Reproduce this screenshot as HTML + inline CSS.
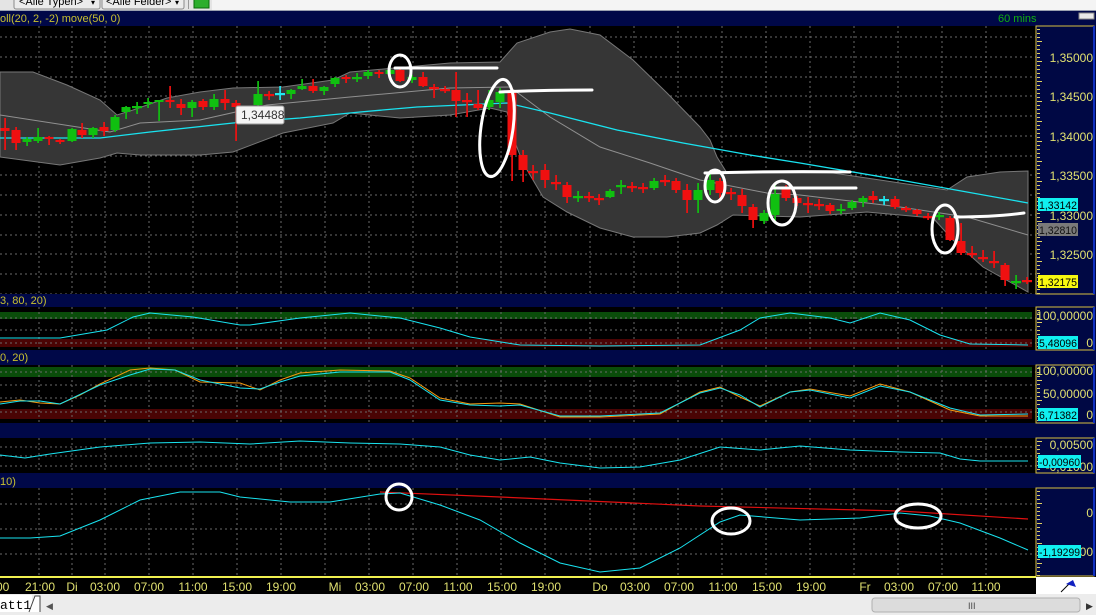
<!DOCTYPE html>
<html><head><meta charset="utf-8"><style>
html,body{margin:0;padding:0;width:1096px;height:615px;overflow:hidden;background:#000;font-family:"Liberation Sans",sans-serif}
svg{display:block}
</style></head><body>
<svg id="s" width="1096" height="615" xmlns="http://www.w3.org/2000/svg" font-family="Liberation Sans, sans-serif" font-size="11">
<rect x="0" y="0" width="1096" height="11" fill="#f4f4f4"/>
<rect x="0" y="0" width="212" height="11" fill="#e4e4e4"/>
<rect x="14" y="-4" width="86" height="13" rx="2" fill="#ececec" stroke="#8a8a8a"/>
<text x="19" y="5" font-size="11" fill="#000">&lt;Alle Typen&gt;</text><text x="91" y="5" font-size="8">▾</text>
<rect x="102" y="-4" width="82" height="13" rx="2" fill="#ececec" stroke="#8a8a8a"/>
<text x="106" y="5" font-size="11" fill="#000">&lt;Alle Felder&gt;</text><text x="175" y="5" font-size="8">▾</text>
<rect x="188" y="-4" width="1" height="13" fill="#999"/>
<rect x="194" y="-3" width="15" height="11" fill="#2cae2c" stroke="#0a6a0a"/>
<rect x="0" y="10" width="1096" height="1" fill="#9aa0b0"/>
<rect x="0" y="11" width="1096" height="15" fill="#000848"/>
<text x="0" y="22" fill="#c8c030">oll(20, 2, -2) move(50, 0)</text>
<text x="998" y="22" fill="#10b010">60 mins</text>
<rect x="1079" y="13" width="15" height="6" fill="#e8e8e8" stroke="#888"/>
<rect x="0" y="26" width="1036" height="268" fill="#000"/>
<g id="grid" stroke="#6a6a6a" stroke-dasharray="2,3" stroke-width="1"></g>
<polygon fill="#363636" stroke="#777" stroke-width="1" points="0,72 33,72 67,85 100,100 117,115 133,110 167,98 200,92 233,88 283,87 333,80 350,72 450,63 500,62 517,43 550,32 570,29 600,35 633,60 667,93 700,127 710,140 717,157 727,173 833,173 900,183 947,190 967,177 1000,172 1028,171 1028,292 983,267 953,240 933,218 867,212 800,217 733,215 717,225 700,233 667,237 633,237 600,228 567,212 543,197 523,163 513,137 507,112 490,108 450,115 400,118 350,113 333,123 283,133 233,152 200,155 140,155 117,153 100,158 60,165 0,157"/>
<polyline fill="none" stroke="#909090" points="0,115 110,132 140,123 200,120 267,105 350,97 450,88 510,87 550,117 600,147 650,163 700,180 767,193 800,195 900,207 967,217 1028,235"/>
<polyline fill="none" stroke="#19e3f0" stroke-width="1.3" points="0,138 100,138 150,132 233,123 300,118 360,112 417,107 507,103 550,113 617,130 683,143 750,155 800,163 900,180 1028,203"/>
<g id="candles"></g>
<rect x="236" y="106" width="48" height="18" rx="2" fill="#f4f4f4" stroke="#999"/>
<text x="241" y="119" fill="#333" font-size="12">1,34488</text>
<g fill="none" stroke="#fff" stroke-width="3" stroke-linecap="round">
<ellipse cx="400" cy="71" rx="11" ry="16"/>
<path d="M395 68 L497 68"/>
<ellipse cx="497" cy="128" rx="16" ry="49" transform="rotate(8 497 128)"/>
<path d="M500 92 Q545 90 592 90"/>
<ellipse cx="715" cy="186" rx="10" ry="16"/>
<path d="M705 173 Q780 171 850 172"/>
<ellipse cx="782" cy="203" rx="14" ry="22"/>
<path d="M772 188 L856 188"/>
<ellipse cx="945" cy="229" rx="13" ry="24"/>
<path d="M955 217 Q995 217 1024 213"/>
</g>
<rect x="0" y="294" width="1096" height="13" fill="#000848"/>
<text x="0" y="304" fill="#c8c030">3, 80, 20)</text>
<rect x="0" y="307" width="1036" height="43" fill="#000"/>
<rect x="0" y="312" width="1032" height="7" fill="#0a4d0a"/>
<rect x="0" y="339" width="1032" height="8" fill="#4a0404"/>
<rect x="0" y="350" width="1096" height="15" fill="#000848"/>
<text x="0" y="361" fill="#c8c030">0, 20)</text>
<rect x="0" y="365" width="1036" height="58" fill="#000"/>
<rect x="0" y="367" width="1032" height="10" fill="#0a4d0a"/>
<rect x="0" y="409" width="1032" height="10" fill="#4a0404"/>
<rect x="0" y="423" width="1096" height="15" fill="#000848"/>
<rect x="0" y="438" width="1036" height="35" fill="#000"/>
<rect x="0" y="473" width="1096" height="15" fill="#000848"/>
<text x="0" y="485" fill="#c8c030">10)</text>
<rect x="0" y="488" width="1036" height="89" fill="#000"/>
<g id="grid2" stroke="#6a6a6a" stroke-dasharray="2,3"></g>
<polyline fill="none" stroke="#19e3f0" points="0,338 60,338 107,330 133,317 150,313 193,317 240,325 250,325 300,318 350,313 400,318 440,328 470,337 520,345 600,346 700,345 740,330 760,318 790,313 830,318 850,323 880,313 910,320 940,335 970,344 1028,345"/>
<polyline fill="none" stroke="#f59a10" points="0,402 20,400 40,403 60,404 80,395 100,384 130,370 150,368 175,370 200,382 240,383 260,390 280,380 300,373 340,370 390,371 410,378 440,398 470,404 500,403 520,404 560,417 600,417 660,414 700,392 720,387 740,397 760,406 790,392 810,389 850,396 880,384 910,392 950,410 980,416 1028,416"/>
<polyline fill="none" stroke="#19e3f0" points="0,404 20,401 40,401 60,404 100,385 130,375 150,369 175,370 200,380 240,388 260,389 280,382 300,376 340,372 390,372 410,380 440,400 470,405 500,406 520,405 560,416 600,416 660,413 700,393 720,388 740,395 760,407 790,392 810,390 850,398 880,386 910,392 950,408 980,415 1028,414"/>
<polyline fill="none" stroke="#19e3f0" points="0,455 25,458 50,454 100,447 150,443 200,442 250,444 300,441 350,443 400,444 440,447 470,455 500,460 530,457 560,463 600,468 640,467 680,460 720,447 760,450 800,446 850,450 900,452 940,453 960,459 980,461 1028,461"/>
<polyline fill="none" stroke="#e01010" stroke-width="1.2" points="380,492 500,497 700,506 900,511 1028,519"/>
<polyline fill="none" stroke="#19e3f0" points="0,538 30,538 60,536 100,520 140,500 180,492 220,492 240,497 290,502 330,502 380,494 400,493 440,505 480,520 520,543 560,563 600,572 640,568 680,548 720,522 740,515 800,520 860,518 900,513 930,516 960,523 1000,538 1028,550"/>
<g fill="none" stroke="#fff" stroke-width="3">
<ellipse cx="399" cy="497" rx="13" ry="13"/>
<ellipse cx="731" cy="521" rx="19" ry="13"/>
<ellipse cx="918" cy="516" rx="23" ry="12"/>
</g>
<g id="axis"></g>
<rect x="0" y="576" width="1036" height="2" fill="#f0f050"/>
<rect x="0" y="578" width="1036" height="16" fill="#000"/>
<g id="times" fill="#e0e070" font-size="12"></g>
<rect x="1036" y="577" width="60" height="17" fill="#fff"/>
<path d="M1061 592 L1070 583" stroke="#000"/><path d="M1066 584 L1073 580 L1076 587 Z" fill="#1020c0"/>
<rect x="0" y="594" width="1096" height="21" fill="#ececec"/>
<rect x="0" y="595" width="32" height="17" fill="#fff"/>
<path d="M29 612 L35 596 L40 596 L40 612" fill="#fff" stroke="#444"/>
<text x="0" y="609" font-size="13" fill="#000" font-family="Liberation Mono,monospace">att1</text>
<text x="46" y="609" font-size="9" fill="#555">◀</text>
<rect x="872" y="598" width="208" height="14" rx="3" fill="#dcdcdc" stroke="#b0b0b0"/>
<text x="968" y="609" font-size="9" fill="#444">III</text>
<text x="1086" y="609" font-size="9" fill="#333">▶</text>
</svg>
<script>
var NS="http://www.w3.org/2000/svg";
function el(p,t,a,txt){var e=document.createElementNS(NS,t);for(var k in a)e.setAttribute(k,a[k]);if(txt)e.textContent=txt;p.appendChild(e);return e;}
var grid=document.getElementById('grid'),grid2=document.getElementById('grid2');
var tx=[40,72,105,149,193,237,281,335,370,414,458,502,546,600,635,679,723,767,811,865,899,943,986];
var tl=["21:00","Di","03:00","07:00","11:00","15:00","19:00","Mi","03:00","07:00","11:00","15:00","19:00","Do","03:00","07:00","11:00","15:00","19:00","Fr","03:00","07:00","11:00"];
var vx=[39,72,105,149,193,237,281,325,369,413,457,501,545,590,634,678,722,766,810,854,898,942,986];
tx.forEach(function(x,i){var g=vx[i];
 el(grid,'line',{x1:g,y1:26,x2:g,y2:294});
 [[307,350],[365,423],[438,473],[488,576]].forEach(function(r){el(grid2,'line',{x1:g,y1:r[0],x2:g,y2:r[1]});});
 el(document.getElementById('times'),'text',{x:x,y:591,'text-anchor':'middle'},tl[i]);});
el(document.getElementById('times'),'text',{x:-4,y:591},'00');
for(var y=37;y<294;y+=19.75)el(grid,'line',{x1:0,y1:Math.round(y),x2:1036,y2:Math.round(y)});
[318,330,343,372,385,398,412,447,456,466,504,529,554].forEach(function(y){el(grid2,'line',{x1:0,y1:y,x2:1036,y2:y});});
var C=[[5,128,131,118,150],[16,130,143,127,150],[27,142,139,137,146],[38,141,137,128,143],[49,137,139,136,145],[60,140,141,139,144],[72,141,129,128,142],[82,130,135,123,138],[93,135,128,127,138],[104,127,131,122,136],[115,130,117,115,132],[126,112,107,106,119],[137,107,107,102,114],[148,104,102,98,108],[159,101,100,100,121],[170,100,102,86,108],[181,104,108,99,115],[192,108,102,100,117],[203,101,107,99,110],[214,107,99,94,110],[225,99,103,90,110],[236,103,107,100,141],[258,105,94,81,107],[269,95,95,91,100],[280,94,94,86,100],[291,94,90,89,99],[302,89,86,79,90],[313,86,91,79,93],[324,91,87,86,95],[335,84,78,77,87],[346,77,79,75,83],[357,78,78,73,82],[368,76,72,70,79],[379,72,74,70,78],[390,74,70,68,76],[400,70,81,68,82],[412,80,77,75,83],[423,77,86,72,87],[434,88,88,84,98],[445,90,90,86,93],[456,90,101,72,117],[467,101,101,93,117],[478,104,108,90,110],[489,107,100,90,110],[500,102,92,88,108],[512,93,155,88,181],[523,155,170,150,182],[533,172,172,165,180],[545,170,180,164,188],[556,183,183,175,190],[567,185,197,182,203],[578,197,197,191,202],[589,197,197,192,202],[599,199,199,194,205],[610,197,191,189,198],[621,186,186,180,194],[632,187,187,182,192],[643,188,188,183,193],[654,188,181,178,190],[665,181,181,175,186],[676,181,190,178,193],[687,190,200,184,213],[698,200,190,183,213],[710,190,180,174,195],[720,181,193,178,200],[731,193,193,188,200],[742,195,206,189,213],[753,207,220,204,228],[764,221,213,210,224],[775,215,194,183,222],[786,188,198,185,201],[797,198,203,196,206],[808,204,204,197,213],[819,205,205,199,210],[830,205,211,203,214],[841,211,209,204,214],[852,208,202,200,210],[863,202,198,196,207],[873,196,200,191,203],[884,200,200,196,205],[895,199,207,196,209],[906,209,209,206,212],[917,210,214,209,216],[928,217,217,213,220],[939,216,216,212,220],[950,218,240,216,241],[961,241,253,223,255],[972,254,254,246,258],[983,258,258,250,262],[994,262,262,251,268],[1005,265,280,263,286],[1016,282,282,275,289],[1027,281,281,277,284]];
var cg=document.getElementById('candles');
C.forEach(function(c){var x=c[0],o=c[1],cl=c[2],col=o==cl?(x==280||x==884?'#20e8f0':(x==137||x==357||x==578||x==621||x==939||x==1016?'#10c010':'#f01010')):(cl<o?'#10c010':'#f01010');
 el(cg,'rect',{x:x-0.75,y:c[3],width:1.7,height:c[4]-c[3],fill:col});
 var t=Math.min(o,cl),h=Math.max(Math.abs(o-cl),2);
 if(o==cl)el(cg,'rect',{x:x-5,y:o-1,width:10,height:2.2,fill:col});
 else el(cg,'rect',{x:x-4.5,y:t,width:9,height:h,fill:col});});
var ax=document.getElementById('axis');
[[26,294],[307,350],[365,423],[438,473],[488,576]].forEach(function(r){
 el(ax,'rect',{x:1036,y:r[0],width:60,height:r[1]-r[0],fill:'#000844'});
 el(ax,'rect',{x:1036,y:r[0],width:58,height:r[1]-r[0],fill:'none',stroke:'#d8c040','stroke-width':1});
 el(ax,'rect',{x:1093,y:r[0],width:2,height:r[1]-r[0],fill:'#1030c0'});
 for(var y=r[0]+3;y<r[1];y+=4)el(ax,'rect',{x:1037,y:y,width:y%20<4?5:3,height:1,fill:'#e0d060'});});
function lab(t,y){el(ax,'text',{x:1093,y:y,'text-anchor':'end',fill:'#e0e070','font-size':12},t);}
[["1,35000",62],["1,34500",101],["1,34000",141],["1,33500",180],["1,33000",220],["1,32500",259]].forEach(function(a){lab(a[0],a[1]);});
lab("100,00000",320);lab("0",347);lab("100,00000",375);lab("50,00000",398);lab("0",419);lab("0,00500",449);lab("-0,01000",471);lab("0",517);lab("-1,00000",556);
function tag(t,y,bg,w,fg){el(ax,'rect',{x:1038,y:y,width:w,height:13,fill:bg});el(ax,'text',{x:1039,y:y+11,fill:fg||'#000','font-size':11,textLength:w-2,lengthAdjust:'spacingAndGlyphs'},t);}
tag("1,33142",198,'#10f0f0',40);tag("1,32810",223,'#7a7a7a',40,'#111');tag("1,32175",275,'#f8f810',40);
tag("5,48096",336,'#10f0f0',40);tag("6,71382",408,'#10f0f0',40);tag("-0,00960",455,'#10f0f0',43);tag("-1,19299",545,'#10f0f0',43);
</script>
</body></html>
